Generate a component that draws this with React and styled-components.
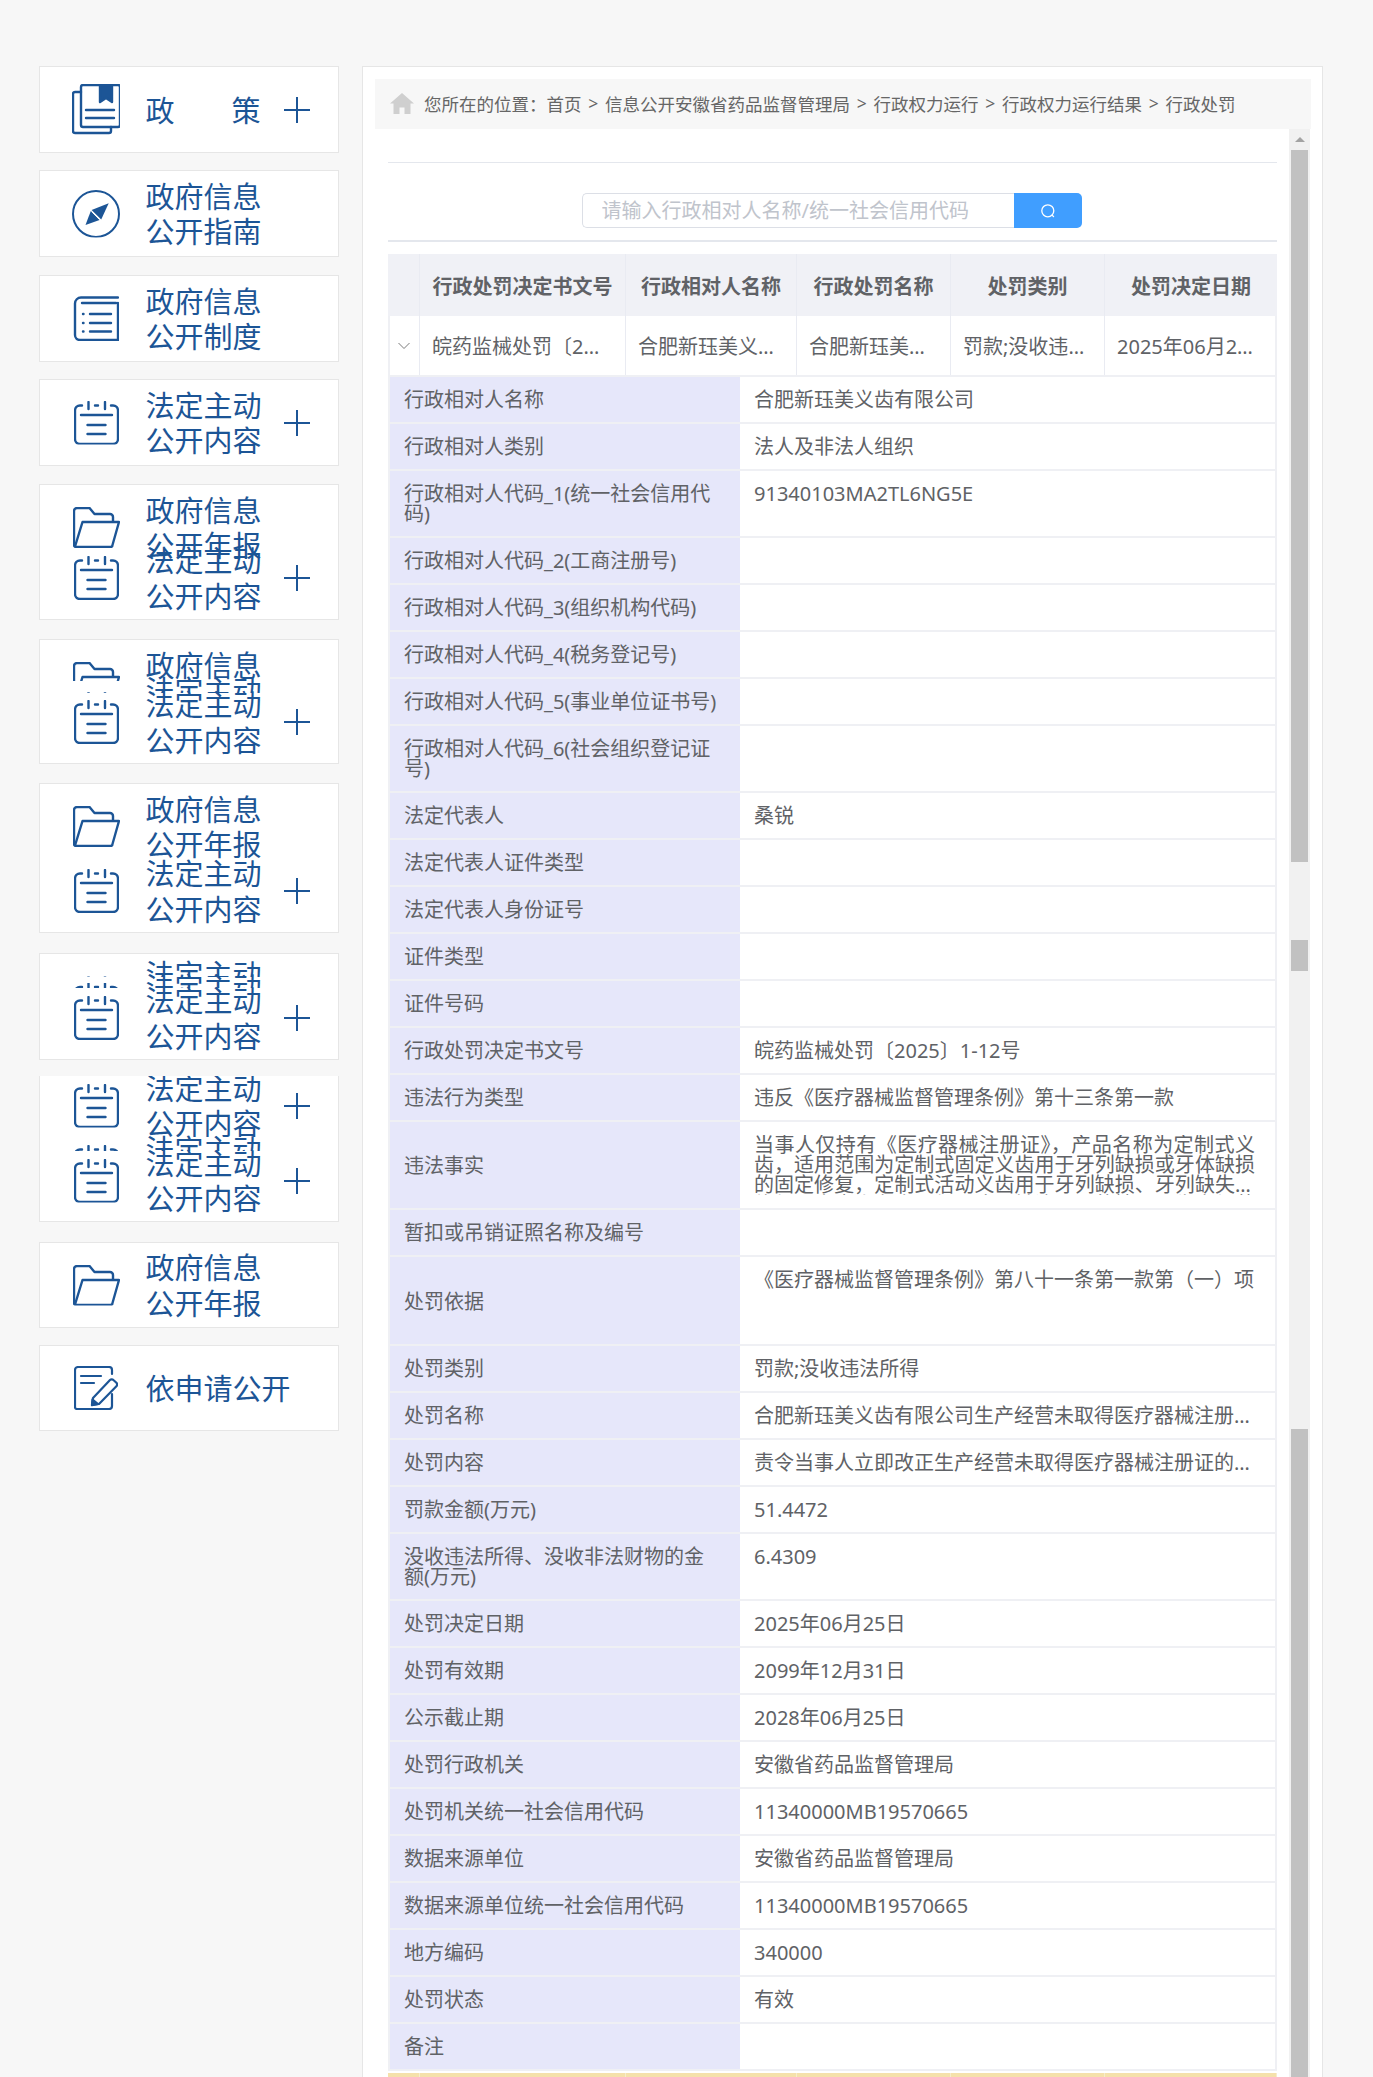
import React from "react";
import styled, { createGlobalStyle, css } from "styled-components";

const GlobalStyle = createGlobalStyle`
  * { box-sizing: border-box; }
  html, body { margin: 0; padding: 0; background: #f7f7f7; }
  body { font-family: "Noto Sans", "Noto Sans CJK SC", sans-serif; }
`;

const BLUE = "#1c5596";

const Page = styled.div`
  display: flex;
  align-items: flex-start;
  gap: 23px;
  height: 2077px;
  padding: 66px 0 0 39px;
  overflow: hidden;
`;
const Sidebar = styled.nav`
  display: flex;
  flex-direction: column;
  width: 300px;
  flex: none;
`;
const Card = styled.div`
  height: ${(p) => p.$h}px;
  margin-top: ${(p) => p.$gap}px;
  background: #fff;
  border: 1px solid #e6e6e6;
  ${(p) => p.$open && css`
    border-top: 0;
    overflow: hidden;
  `}
`;
const Item = styled.div`
  position: relative;
  height: ${(p) => p.$h}px;
  margin-top: ${(p) => p.$pull || 0}px;
  background: ${(p) => (p.$cover ? "#fff" : "transparent")};
`;
const ItemInner = styled.div`
  display: flex;
  align-items: center;
  height: 100%;
  padding-left: 32px;
  transform: translateY(${(p) => p.$dy || 0}px);
`;
const IconSlot = styled.div`
  display: flex;
  justify-content: center;
  width: 48px;
  flex: none;
  clip-path: inset(${(p) => p.$clip || 0}px ${(p) => p.$side || 0}px 0 ${(p) => p.$side || 0}px);
  svg { display: block; }
`;
const Title = styled.div`
  width: ${(p) => (p.$wide ? 145 : 115)}px;
  margin-left: 25.5px;
  padding-top: 1.5px;
  flex: none;
  font-size: 29px;
  line-height: 35.5px;
  color: ${BLUE};
  white-space: nowrap;
  ${(p) => p.$justify && css`
    text-align: justify;
    text-align-last: justify;
  `}
`;
const PlusSlot = styled.div`
  margin-left: 22.5px;
  width: 28px;
  height: 28px;
  flex: none;
  svg { display: block; }
`;

const Main = styled.main`
  width: 961px;
  flex: none;
  height: 2100px;
  padding: 12px 11px 12px 12px;
  background: #fff;
  border: 1px solid #e6e6e6;
`;
const Crumbs = styled.div`
  display: flex;
  align-items: center;
  height: 50px;
  padding: 0 0 2px 15px;
  background: #f7f7f7;
  font-size: 17.5px;
  color: #666;
  white-space: nowrap;
`;
const HomeSlot = styled.div`
  width: 24px;
  margin-right: 10px;
  svg { display: block; }
`;
const Sep = styled.span`
  width: 23.5px;
  text-align: center;
  color: #666;
`;
const Body = styled.div`
  display: flex;
  width: 935px;
`;
const Content = styled.div`
  width: 914px;
  padding: 33px 12px 0 13px;
`;
const TopRule = styled.div`
  width: 889px;
  height: 1px;
  background: #e4e7ed;
`;
const SearchBar = styled.div`
  display: flex;
  justify-content: center;
  height: 79px;
  padding: 30px 2px 0 0;
  border-bottom: 2px solid #e4e7ed;
`;
const SearchInput = styled.input`
  width: 432px;
  height: 35px;
  padding: 0 19px;
  border: 1px solid #dcdfe6;
  border-right: 0;
  border-radius: 5px 0 0 5px;
  outline: none;
  font: 400 20px "Noto Sans", "Noto Sans CJK SC", sans-serif;
  color: #606266;
  &::placeholder { color: #c0c4cc; opacity: 1; }
`;
const SearchButton = styled.button`
  display: flex;
  align-items: center;
  justify-content: center;
  width: 68px;
  height: 35px;
  padding: 0;
  border: 0;
  border-radius: 0 5px 5px 0;
  background: #409eff;
`;

const columns = css`
  display: grid;
  grid-template-columns: 32px 206px 171px 154px 154px 1fr;
`;
const HeadRow = styled.div`
  ${columns}
  height: 62px;
  margin-top: 12px;
  background: #f0f1f6;
`;
const HeadCell = styled.div`
  display: flex;
  align-items: center;
  justify-content: center;
  border-right: 1px solid #e9ebf2;
  font-size: 20px;
  font-weight: 700;
  color: #606266;
  &:last-child { border-right: 0; }
`;
const DataRow = styled.div`
  ${columns}
  height: 61px;
  background: #fff;
  border-bottom: 2px solid #eff0f4;
  box-shadow: inset 2px 0 #eff0f4, inset -2px 0 #eff0f4;
  color: #606266;
`;
const DataCell = styled.div`
  display: flex;
  align-items: center;
  justify-content: ${(p) => (p.$center ? "center" : "flex-start")};
  min-width: 0;
  padding: ${(p) => (p.$center ? "0" : "0 18px 0 12px")};
  border-right: 1px solid #e9ebf2;
  font-size: 20px;
  &:last-child { border-right: 0; }
`;
const Clip = styled.span`
  overflow: hidden;
  white-space: nowrap;
  text-overflow: ellipsis;
`;
const Detail = styled.div`
  border: 2px solid #eff0f4;
  border-width: 0 2px;
`;
const Row = styled.div`
  display: grid;
  grid-template-columns: 350px minmax(0, 1fr);
  min-height: ${(p) => p.$h || 47}px;
  border-bottom: 2px solid #eff0f4;
  font-size: 20px;
  line-height: 20px;
  color: #606266;
`;
const Label = styled.div`
  display: flex;
  align-items: center;
  padding: ${(p) => (p.$tall ? 14.5 : 12.5)}px 20px 12.5px 14px;
  background: #e6e7fa;
`;
const Value = styled.div`
  padding: 12.5px 20px 12.5px 14px;
  min-width: 0;
  ${(p) => p.$one && css`
    overflow: hidden;
    white-space: nowrap;
    text-overflow: ellipsis;
  `}
`;
const Clamped = styled.div`
  display: -webkit-box;
  -webkit-box-orient: vertical;
  -webkit-line-clamp: 3;
  overflow: hidden;
  text-align: justify;
`;
const YellowRow = styled.div`
  ${columns}
  height: 59px;
  margin-top: 2px;
  background: #f5e1ab;
`;
const YellowCell = styled.div`
  border-right: 1px solid #f7eccb;
`;

const Bar = styled.aside`
  width: 21px;
  height: 2000px;
  flex: none;
  padding: 0 2px;
  background: #f1f1f1;
`;
const ArrowBox = styled.div`
  display: flex;
  justify-content: center;
  height: 21px;
  padding-top: 8px;
`;
const Arrow = styled.div`
  width: 0;
  height: 0;
  border: 5px solid transparent;
  border-top: 0;
  border-bottom: 5px solid #a3a3a3;
`;
const Thumb = styled.div`
  height: ${(p) => p.$h}px;
  margin-top: ${(p) => p.$gap}px;
  background: #c1c1c1;
`;

const Svg = ({ w, h, sw = 2.4, children }) => (
  <svg width={w} height={h} viewBox={`0 0 ${w} ${h}`} fill="none" stroke={BLUE} strokeWidth={sw} strokeLinecap="round" strokeLinejoin="round">
    {children}
  </svg>
);

const BookIcon = () => (
  <Svg w={48} h={51}>
    <path d="M9 3a2 2 0 0 1 2-2h35a2 2 0 0 1 2 2v38a2 2 0 0 1-2 2H11a2 2 0 0 1-2-2z" />
    <path d="M9 8H3a2 2 0 0 0-2 2v37a2 2 0 0 0 2 2h34a2 2 0 0 0 2-2v-4" />
    <path d="M28 1h12v17l-6-4-6 4z" fill={BLUE} />
    <path d="M14 26h28M14 34h28" />
  </Svg>
);
const CompassIcon = () => (
  <Svg w={48} h={48} sw={2}>
    <circle cx="24" cy="24" r="23" />
    <path d="M36.7 13.3 19.6 20l9.6 9.6z" fill={BLUE} stroke="none" />
    <path d="M13.5 35 18.8 21l8.8 9z" fill={BLUE} stroke="none" />
    <path d="M20.5 22.5 27 29" stroke="#fff" strokeWidth="1" />
  </Svg>
);
const ListIcon = () => (
  <Svg w={46} h={45}>
    <path d="M45 1.5H8a6 6 0 0 0-6 6V39a5 5 0 0 0 5 5h38V7" />
    <path d="M9 7h34" />
    <path d="M10 18h.5M10 27h.5M10 35.5h.5M17 18h21M17 27h21M17 35.5h21" />
  </Svg>
);
const CalendarIcon = () => (
  <Svg w={45} h={44}>
    <path d="M8 4.5H6a5 5 0 0 0-5 5V38a5 5 0 0 0 5 5h33a5 5 0 0 0 5-5V9.5a5 5 0 0 0-5-5h-2" />
    <path d="M14.5 1v7M31 1v7M21 4.5h3M7 14h31M13.5 24h18M13.5 33h18" />
  </Svg>
);
const FolderIcon = () => (
  <Svg w={47} h={41}>
    <path d="M1 38V4a3 3 0 0 1 3-3h12.5l5 6H37a3 3 0 0 1 3 3v4" />
    <path d="M2 39.5 9.5 15H46l-6.5 23a2 2 0 0 1-2 2H3a2 2 0 0 1-2-2" />
  </Svg>
);
const EditIcon = () => (
  <Svg w={44} h={44} sw={2.2}>
    <path d="M38 8V4a3 3 0 0 0-3-3H4a3 3 0 0 0-3 3v37a2 2 0 0 0 2 2h32a3 3 0 0 0 3-3V28" />
    <path d="M7 10h20M7 17h13" />
    <path d="M19 32 36 14a2.4 2.4 0 0 1 3.4 0l3 2.8a2.4 2.4 0 0 1 0 3.4L25 38l-7 1z" />
    <path d="M18.5 33.5 24 38l-6 1.2z" fill={BLUE} />
  </Svg>
);
const PlusIcon = () => (
  <Svg w={28} h={28} sw={2}>
    <path d="M14 1v26M1 14h26" strokeLinecap="butt" />
  </Svg>
);
const HomeIcon = () => (
  <svg width="24" height="21" viewBox="0 0 24 21" fill="#cfcfcf">
    <path d="M12 0 24 10.5h-3.5V21h-6v-6.5h-5V21h-6V10.5H0z" />
  </svg>
);
const SearchIcon = () => (
  <svg width="16" height="16" viewBox="0 0 16 16" fill="none" stroke="#fff" strokeWidth="1.3" strokeLinecap="round">
    <circle cx="7.8" cy="7.8" r="6" />
    <path d="M12.2 12.2 13.6 13.6" />
  </svg>
);
const Chevron = () => (
  <svg width="12" height="8" viewBox="0 0 12 8" fill="none" stroke="#7a7a7a" strokeWidth="1">
    <path d="M.5 1 6 6.5 11.5 1" />
  </svg>
);

const REPORT = ["政府信息", "公开年报"];
const ACTIVE = ["法定主动", "公开内容"];

const cards = [
  { h: 87, gap: 0, items: [{ Icon: BookIcon, lines: ["政策"], justify: true, plus: true, h: 85 }] },
  { h: 87, gap: 17, items: [{ Icon: CompassIcon, lines: ["政府信息", "公开指南"], h: 85 }] },
  { h: 87, gap: 18, items: [{ Icon: ListIcon, lines: ["政府信息", "公开制度"], h: 85 }] },
  { h: 87, gap: 17, items: [{ Icon: CalendarIcon, lines: ACTIVE, plus: true, h: 85 }] },
  { h: 136, gap: 18, items: [
    { Icon: FolderIcon, lines: REPORT, h: 85 },
    { Icon: CalendarIcon, lines: ACTIVE, plus: true, h: 82, pull: -33 },
  ] },
  { h: 125, gap: 19, items: [
    { Icon: FolderIcon, lines: REPORT, h: 85 },
    { Icon: CalendarIcon, lines: ACTIVE, h: 12.3, pull: -44.3, cover: true, dy: 20.5, clip: 7, side: 10 },
    { Icon: CalendarIcon, lines: ACTIVE, plus: true, h: 58, cover: true },
  ] },
  { h: 150, gap: 19, items: [
    { Icon: FolderIcon, lines: REPORT, h: 85 },
    { Icon: CalendarIcon, lines: ACTIVE, plus: true, h: 82, pull: -19 },
  ] },
  { h: 107, gap: 20, items: [
    { Icon: CalendarIcon, lines: ACTIVE, h: 23, dy: 26, clip: 7, side: 10 },
    { Icon: CalendarIcon, lines: ACTIVE, h: 11, cover: true, dy: 21.5, clip: 1 },
    { Icon: CalendarIcon, lines: ACTIVE, plus: true, h: 60, cover: true },
  ] },
  { h: 146, gap: 16, open: true, items: [
    { Icon: CalendarIcon, lines: ACTIVE, plus: true, h: 59 },
    { Icon: CalendarIcon, lines: ACTIVE, h: 13.6, pull: 2, cover: true, dy: 23 },
    { Icon: CalendarIcon, lines: ACTIVE, plus: true, h: 60, cover: true },
  ] },
  { h: 86, gap: 20, items: [{ Icon: FolderIcon, lines: REPORT, h: 84 }] },
  { h: 86, gap: 17, items: [{ Icon: EditIcon, lines: ["依申请公开"], wide: true, h: 84 }] },
];

const crumbs = ["首页", "信息公开安徽省药品监督管理局", "行政权力运行", "行政权力运行结果", "行政处罚"];
const heads = ["", "行政处罚决定书文号", "行政相对人名称", "行政处罚名称", "处罚类别", "处罚决定日期"];
const cells = [
  "皖药监械处罚\u30142025\u30151-12号",
  "合肥新珏美义齿有限公司",
  "合肥新珏美义齿有限公司生产经营未取得医疗器械注册证的医疗器械案",
  "罚款;没收违法所得",
  "2025年06月25日",
];
const rows = [
  { k: "行政相对人名称", v: "合肥新珏美义齿有限公司" },
  { k: "行政相对人类别", v: "法人及非法人组织" },
  { k: "行政相对人代码_1(统一社会信用代码)", v: "91340103MA2TL6NG5E" },
  { k: "行政相对人代码_2(工商注册号)" },
  { k: "行政相对人代码_3(组织机构代码)" },
  { k: "行政相对人代码_4(税务登记号)" },
  { k: "行政相对人代码_5(事业单位证书号)" },
  { k: "行政相对人代码_6(社会组织登记证号)" },
  { k: "法定代表人", v: "桑锐" },
  { k: "法定代表人证件类型" },
  { k: "法定代表人身份证号" },
  { k: "证件类型" },
  { k: "证件号码" },
  { k: "行政处罚决定书文号", v: "皖药监械处罚\u30142025\u30151-12号" },
  { k: "违法行为类型", v: "违反《医疗器械监督管理条例》第十三条第一款" },
  {
    k: "违法事实",
    h: 88,
    clamp: true,
    v: "当事人仅持有《医疗器械注册证》\uFF0C产品名称为定制式义齿\uFF0C适用范围为定制式固定义齿用于牙列缺损或牙体缺损的固定修复\uFF0C定制式活动义齿用于牙列缺损、牙列缺失的修复\uFF0C当事人在未取得医疗器械注册证的情况下生产经营相关产品。",
  },
  { k: "暂扣或吊销证照名称及编号" },
  { k: "处罚依据", h: 89, v: "《医疗器械监督管理条例》第八十一条第一款第\uFF08一\uFF09项" },
  { k: "处罚类别", v: "罚款;没收违法所得" },
  { k: "处罚名称", one: true, v: "合肥新珏美义齿有限公司生产经营未取得医疗器械注册证的医疗器械案" },
  { k: "处罚内容", one: true, v: "责令当事人立即改正生产经营未取得医疗器械注册证的医疗器械的违法行为" },
  { k: "罚款金额(万元)", v: "51.4472" },
  { k: "没收违法所得、没收非法财物的金额(万元)", v: "6.4309" },
  { k: "处罚决定日期", v: "2025年06月25日" },
  { k: "处罚有效期", v: "2099年12月31日" },
  { k: "公示截止期", v: "2028年06月25日" },
  { k: "处罚行政机关", v: "安徽省药品监督管理局" },
  { k: "处罚机关统一社会信用代码", v: "11340000MB19570665" },
  { k: "数据来源单位", v: "安徽省药品监督管理局" },
  { k: "数据来源单位统一社会信用代码", v: "11340000MB19570665" },
  { k: "地方编码", v: "340000" },
  { k: "处罚状态", v: "有效" },
  { k: "备注" },
];
const thumbs = [
  { h: 712, gap: 0 },
  { h: 31, gap: 78 },
  { h: 900, gap: 458 },
];

export default function App() {
  return (
    <>
      <GlobalStyle />
      <Page>
        <Sidebar>
          {cards.map((card, i) => (
            <Card key={i} $h={card.h} $gap={card.gap} $open={card.open}>
              {card.items.map(({ Icon, lines, justify, wide, plus, h, pull, cover, dy, clip, side }, j) => (
                <Item key={j} $h={h} $pull={pull} $cover={cover}>
                  <ItemInner $dy={dy}>
                    <IconSlot $clip={clip} $side={side}>
                      <Icon />
                    </IconSlot>
                    <Title $justify={justify} $wide={wide}>
                      {lines.map((line) => (
                        <div key={line}>{line}</div>
                      ))}
                    </Title>
                    {plus && (
                      <PlusSlot>
                        <PlusIcon />
                      </PlusSlot>
                    )}
                  </ItemInner>
                </Item>
              ))}
            </Card>
          ))}
        </Sidebar>
        <Main>
          <Crumbs>
            <HomeSlot>
              <HomeIcon />
            </HomeSlot>
            <span>{"您所在的位置\uFF1A"}</span>
            {crumbs.map((c, i) => (
              <React.Fragment key={c}>
                {i > 0 && <Sep>&gt;</Sep>}
                <span>{c}</span>
              </React.Fragment>
            ))}
          </Crumbs>
          <Body>
            <Content>
              <TopRule />
              <SearchBar>
                <SearchInput placeholder="请输入行政相对人名称/统一社会信用代码" />
                <SearchButton aria-label="搜索">
                  <SearchIcon />
                </SearchButton>
              </SearchBar>
              <HeadRow>
                {heads.map((h, i) => (
                  <HeadCell key={i}>{h}</HeadCell>
                ))}
              </HeadRow>
              <DataRow>
                <DataCell $center>
                  <Chevron />
                </DataCell>
                {cells.map((c) => (
                  <DataCell key={c}>
                    <Clip>{c}</Clip>
                  </DataCell>
                ))}
              </DataRow>
              <Detail>
                {rows.map((r) => (
                  <Row key={r.k} $h={r.h}>
                    <Label $tall={r.h}>{r.k}</Label>
                    <Value $one={r.one}>{r.clamp ? <Clamped>{r.v}</Clamped> : r.v}</Value>
                  </Row>
                ))}
              </Detail>
              <YellowRow>
                {heads.map((_, i) => (
                  <YellowCell key={i} />
                ))}
              </YellowRow>
            </Content>
            <Bar>
              <ArrowBox>
                <Arrow />
              </ArrowBox>
              {thumbs.map((t, i) => (
                <Thumb key={i} $h={t.h} $gap={t.gap} />
              ))}
            </Bar>
          </Body>
        </Main>
      </Page>
    </>
  );
}
